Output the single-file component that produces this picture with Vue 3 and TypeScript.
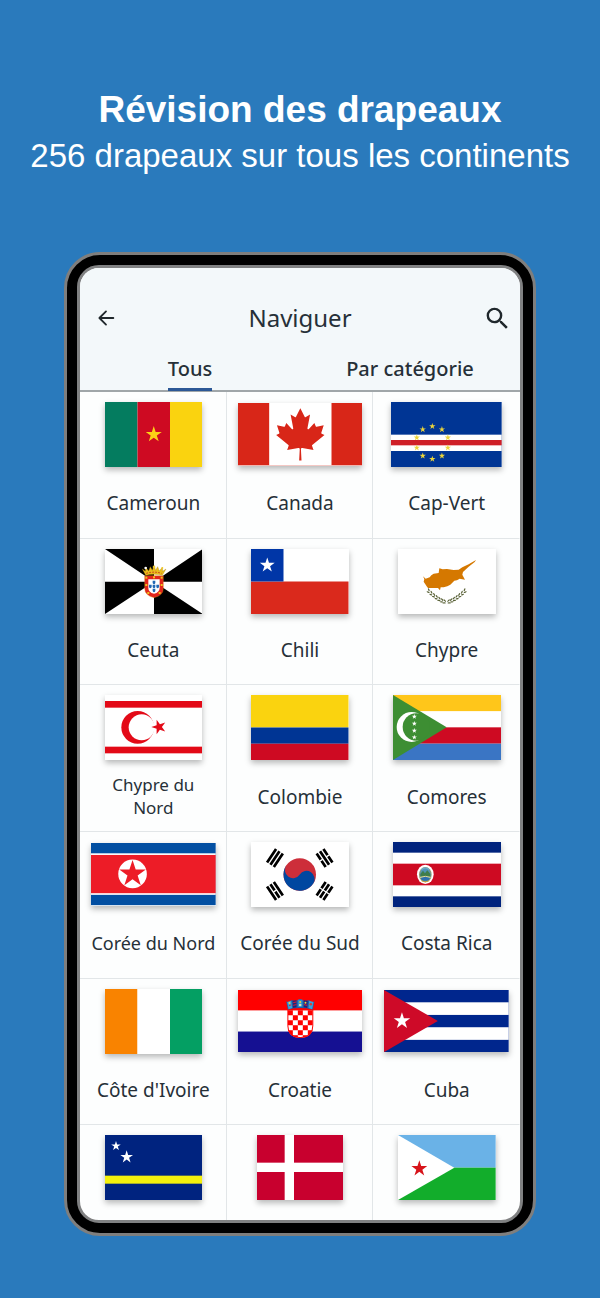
<script setup lang="ts">
import { ref } from 'vue'

type Shape = { tag: string; attrs: Record<string, string | number> }
type Flag = { name?: string; w: number; h: number; box?: string; size?: 'medium' | 'small'; shapes: Shape[] }

const rect = (x: number, y: number, width: number, height: number, fill: string): Shape => ({
  tag: 'rect',
  attrs: { x, y, width, height, fill },
})
const path = (d: string, fill: string, extra: Record<string, string | number> = {}): Shape => ({
  tag: 'path',
  attrs: { d, fill, ...extra },
})
const circle = (cx: number, cy: number, r: number, fill: string): Shape => ({
  tag: 'circle',
  attrs: { cx, cy, r, fill },
})
const ellipse = (cx: number, cy: number, rx: number, ry: number, fill: string, angle = 0): Shape => ({
  tag: 'ellipse',
  attrs: { cx, cy, rx, ry, fill, transform: `rotate(${angle} ${cx} ${cy})` },
})
const star = (cx: number, cy: number, r: number, fill: string, angle = -90): Shape => {
  const points = Array.from({ length: 10 }, (_, i) => {
    const a = ((angle + i * 36) * Math.PI) / 180
    const d = i % 2 ? r * 0.382 : r
    return `${(cx + d * Math.cos(a)).toFixed(2)},${(cy + d * Math.sin(a)).toFixed(2)}`
  }).join(' ')
  return { tag: 'polygon', attrs: { points, fill } }
}

const capeVerdeStars = Array.from({ length: 10 }, (_, i) => {
  const a = ((i * 36 - 90) * Math.PI) / 180
  return star(124 + 49 * Math.cos(a), 122 + 49 * Math.sin(a), 10, '#ecd53a')
})

// Two olive branches that rise from a shared foot.
const oliveLeaves = [-1, 1].flatMap((side) =>
  Array.from({ length: 7 }, (_, i) => {
    const t = (i + 0.7) / 7
    const x = 146 + side * 56 * t
    const y = 160 - 36 * Math.pow(t, 1.5)
    const slope = -side * (15 + 30 * t)
    return [
      ellipse(x, y - 4, 5, 2, '#5a6238', slope - side * 25),
      ellipse(x + side * 2, y + 3, 5, 2, '#5a6238', slope + side * 20),
    ]
  }).flat(),
)

const checkers = Array.from({ length: 30 }, (_, i) => ({ c: i % 5, r: Math.floor(i / 5) }))
  .filter(({ c, r }) => (c + r) % 2 === 0)
  .map(({ c, r }): Shape => {
    const square = rect(150 + c * 15, 61 + r * 15, 15, 15, '#f00')
    return { tag: 'rect', attrs: { ...square.attrs, 'clip-path': 'url(#shield)' } }
  })

const trigrams = 'M-6-25H6M-6-22H6M-6-19H6M-6 19H6M-6 22H6M-6 25H6'

const flags: Flag[] = [
  {
    name: 'Cameroun', w: 150, h: 100,
    shapes: [rect(0, 0, 50, 100, '#047c5f'), rect(50, 0, 50, 100, '#ce0a22'), rect(100, 0, 50, 100, '#fad30f'), star(75, 50, 13, '#fcd116')],
  },
  {
    name: 'Canada', w: 9600, h: 4800,
    shapes: [
      rect(0, 0, 9600, 4800, '#d82618'),
      path('m2400 0h4800v4800h-4800zm2490 4430-45-863a95 95 0 0 1 111-98l859 151-116-320a65 65 0 0 1 20-73l941-762-212-99a65 65 0 0 1-34-79l186-572-542 115a65 65 0 0 1-73-38l-105-247-423 454a65 65 0 0 1-111-57l204-1052-327 189a65 65 0 0 1-91-27l-332-652-332 652a65 65 0 0 1-91 27l-327-189 204 1052a65 65 0 0 1-111 57l-423-454-105 247a65 65 0 0 1-73 38l-542-115 186 572a65 65 0 0 1-34 79l-212 99 941 762a65 65 0 0 1 20 73l-116 320 859-151a95 95 0 0 1 111 98l-45 863z', '#fff'),
    ],
  },
  {
    name: 'Cap-Vert', w: 332, h: 195,
    shapes: [rect(0, 0, 332, 195, '#003594'), rect(0, 98, 332, 49, '#fff'), rect(0, 114, 332, 16, '#cf1f27'), ...capeVerdeStars],
  },
  {
    name: 'Ceuta', w: 293, h: 195,
    shapes: [
      rect(0, 0, 293, 195, '#fff'),
      path('M0 0H147V98ZM293 0V98H147ZM0 98H147L0 195ZM147 98L293 195H147Z', '#000'),
      path('M119 80H175V118Q175 140 147 146Q119 140 119 118Z', '#e2251c', { stroke: '#d9a514', 'stroke-width': 1 }),
      path('M130 91H164V116Q164 130 147 134Q130 130 130 116Z', '#fff'),
      ...[[147, 100], [136, 112], [147, 112], [158, 112], [147, 124]].map(([x, y]) => path(`M${x - 4} ${y - 5}h8v6q0 4-4 5q-4-1-4-5z`, '#2368b4')),
      ...[[124, 86], [147, 85], [170, 86], [124, 108], [170, 108], [130, 132], [164, 132]].map(([x, y]) => rect(x - 3, y - 3, 6, 6, '#f1c31b')),
      path('M122 79L112 60L121 67L122 55L131 66L136 53L142 64L147 49L152 64L158 53L163 66L172 55L173 67L183 60L172 79Q147 72 122 79Z', '#e9bd1c', { stroke: '#a87b10', 'stroke-width': 1 }),
      circle(122, 57, 4, '#fff'),
      circle(147, 54, 4, '#efc92f'),
      circle(172, 57, 3, '#efc92f'),
      path('M124 73Q147 66 170 73', 'none', { stroke: '#c9391c', 'stroke-width': 3, 'stroke-dasharray': '5 4' }),
    ],
  },
  {
    name: 'Chili', w: 150, h: 100,
    shapes: [rect(0, 0, 150, 50, '#fff'), rect(0, 50, 150, 50, '#da291c'), rect(0, 0, 50, 50, '#0036a7'), star(25, 25, 12, '#fff')],
  },
  {
    name: 'Chypre', w: 293, h: 195,
    shapes: [
      rect(0, 0, 293, 195, '#fff'),
      path('M75 82L83 89L95 85L100 79L107 74L122 72L124 58L134 61L147 60L167 63L182 62L193 55L212 46L234 33L230 39L212 53L195 69L193 77L201 92L185 89L177 94L169 95L157 107L148 112L137 115L128 115L126 124L120 117L102 117L90 117L87 113L83 107L77 98L79 90Z', '#d57800'),
      ...oliveLeaves,
    ],
  },
  {
    name: 'Chypre du Nord', w: 293, h: 195, size: 'small',
    shapes: [
      rect(0, 0, 293, 195, '#fff'), rect(0, 18, 293, 20, '#e30a17'), rect(0, 155, 293, 20, '#e30a17'),
      circle(98, 97, 49, '#e30a17'), circle(110, 97, 39, '#fff'), star(162, 96, 23, '#e30a17', 180),
    ],
  },
  {
    name: 'Colombie', w: 150, h: 100,
    shapes: [rect(0, 0, 150, 50, '#fad30f'), rect(0, 50, 150, 25, '#003594'), rect(0, 75, 150, 25, '#ce0a22')],
  },
  {
    name: 'Comores', w: 325, h: 195,
    shapes: [
      rect(0, 0, 325, 49, '#ffc61a'), rect(0, 49, 325, 48, '#fff'), rect(0, 97, 325, 49, '#ce0a22'), rect(0, 146, 325, 49, '#3a75c4'),
      path('M0 0L161 97L0 195Z', '#3d8e33'),
      circle(56, 96, 45, '#fff'), circle(70, 96, 41, '#3d8e33'),
      ...[65, 86, 107, 127].map((y) => star(64, y, 8, '#fff')),
    ],
  },
  {
    name: 'Corée du Nord', w: 375, h: 187, size: 'medium',
    shapes: [
      rect(0, 0, 375, 187, '#024fa2'), rect(0, 31, 375, 125, '#fff'), rect(0, 36, 375, 115, '#ed1c27'),
      circle(125, 93, 43, '#fff'), star(125, 93, 42, '#ed1c27'),
    ],
  },
  {
    name: 'Corée du Sud', w: 72, h: 48, box: '-36 -24 72 48',
    shapes: [
      rect(-36, -24, 72, 48, '#fff'),
      path(trigrams, 'none', { stroke: '#000', 'stroke-width': 2, transform: 'rotate(-56.31)' }),
      path('M0 17V27', 'none', { stroke: '#fff', transform: 'rotate(-56.31)' }),
      path(trigrams, 'none', { stroke: '#000', 'stroke-width': 2, transform: 'rotate(-123.69)' }),
      path('M0-23.500V-20.500M0 17V20.500M0 23.500V27', 'none', { stroke: '#fff', transform: 'rotate(-123.69)' }),
      circle(0, 0, 12, '#cd2e3a'),
      path('M0-12A6 6 0 0 0 0 0A6 6 0 0 1 0 12A12 12 0 0 1 0-12Z', '#0047a0', { transform: 'rotate(-56.31)' }),
    ],
  },
  {
    name: 'Costa Rica', w: 325, h: 195,
    shapes: [
      rect(0, 0, 325, 195, '#00237d'), rect(0, 32, 325, 131, '#fff'), rect(0, 65, 325, 65, '#ce0a22'),
      ellipse(97, 97, 25, 29, '#fff'),
      ellipse(97, 98, 19, 23, '#8c9a70'),
      ellipse(97, 98, 16, 19, '#4f93b8'),
      path('M82 96L90 86L96 94L103 85L112 96V105H82Z', '#3f7d4b'),
      path('M83 108Q97 101 111 108L106 116H88Z', '#2d6fae'),
      path('M85 83Q97 72 109 83', 'none', { stroke: '#6aa9cf', 'stroke-width': 4 }),
      path('M81 106Q97 100 113 106', 'none', { stroke: '#e6dc9c', 'stroke-width': 3 }),
      path('M85 116Q97 124 109 116', 'none', { stroke: '#c9a640', 'stroke-width': 3 }),
    ],
  },
  {
    name: "Côte d'Ivoire", w: 150, h: 100,
    shapes: [rect(0, 0, 50, 100, '#f98300'), rect(50, 0, 50, 100, '#fff'), rect(100, 0, 50, 100, '#049f63')],
  },
  {
    name: 'Croatie', w: 375, h: 187,
    shapes: [
      rect(0, 0, 375, 62, '#f00'), rect(0, 62, 375, 63, '#fff'), rect(0, 125, 375, 62, '#151092'),
      path('M150 60H225V108Q225 143 187 143Q150 143 150 108Z', '#fff', { stroke: '#f00', 'stroke-width': 3 }),
      ...checkers,
      path('M150 59L145 34L156 39L160 30L172 34L187 27L202 34L214 30L219 39L230 34L225 59Q187 50 150 59Z', '#1b5fa8'),
      path('M148 36L160 32L163 54L152 58Z', '#3aa0dc'),
      path('M164 32L176 31V52L166 54Z', '#20227c'),
      path('M180 29H194V51H180Z', '#2f8fd0'),
      path('M198 31L210 32L208 54L198 52Z', '#20227c'),
      path('M214 32L227 36L223 58L212 54Z', '#3aa0dc'),
      path('M166 38L176 36M166 46L176 44M198 44L208 46M153 47L160 45', 'none', { stroke: '#e2202c', 'stroke-width': 3 }),
      circle(155, 39, 3, '#f1d23a'), circle(187, 36, 3, '#f1d23a'), circle(203, 38, 3, '#f1d23a'), circle(219, 43, 4, '#e33b2e'), circle(187, 45, 4, '#d8e3c0'),
    ],
  },
  {
    name: 'Cuba', w: 375, h: 187,
    shapes: [rect(0, 0, 375, 187, '#00268d'), rect(0, 37, 375, 38, '#fff'), rect(0, 112, 375, 38, '#fff'), path('M0 0L162 93L0 187Z', '#ce0a28'), star(54, 93, 26, '#fff')],
  },
  {
    w: 293, h: 195,
    shapes: [rect(0, 0, 293, 195, '#00237f'), rect(0, 122, 293, 24, '#f4f00c'), star(33, 33, 15, '#fff'), star(65, 66, 20, '#fff')],
  },
  {
    w: 259, h: 195,
    shapes: [rect(0, 0, 259, 195, '#c8002e'), rect(83, 0, 28, 195, '#fff'), rect(0, 83, 259, 28, '#fff')],
  },
  {
    w: 293, h: 195,
    shapes: [rect(0, 0, 293, 98, '#6ab2e7'), rect(0, 98, 293, 97, '#12ad2b'), path('M0 0L169 98L0 195Z', '#fff'), star(64, 101, 25, '#d7141a')],
  },
]

const tabs = ['Tous', 'Par catégorie']
const active = ref(0)
</script>

<template>
  <main class="page">
    <header class="intro">
      <h1>Révision des drapeaux</h1>
      <p>256 drapeaux sur tous les continents</p>
    </header>

    <section class="phone">
      <div class="screen">
        <div class="top">
          <div class="bar">
            <button type="button" class="icon-button" aria-label="Retour">
              <svg class="back" viewBox="0 0 24 24" aria-hidden="true">
                <path d="M20 12H5M12 4.800L4.800 12L12 19.200" />
              </svg>
            </button>
            <h2>Naviguer</h2>
            <button type="button" class="icon-button" aria-label="Rechercher">
              <svg class="search" viewBox="0 0 24 24" aria-hidden="true">
                <path d="M15.500 14h-.79l-.28-.27A6.471 6.471 0 0 0 16 9.500 6.500 6.500 0 1 0 9.500 16c1.610 0 3.090-.59 4.230-1.570l.27.28v.79l5 4.990L20.490 19l-4.990-5zm-6 0C7.010 14 5 11.990 5 9.500S7.010 5 9.500 5 14 7.010 14 9.500 11.990 14 9.500 14z" />
              </svg>
            </button>
          </div>
          <div class="tabs" role="tablist">
            <button
              v-for="(tab, i) in tabs"
              :key="tab"
              type="button"
              role="tab"
              class="tab"
              :class="{ active: active === i }"
              :aria-selected="active === i"
              @click="active = i"
            >
              <span>{{ tab }}</span>
            </button>
          </div>
        </div>

        <ul class="grid">
          <li v-for="(flag, index) in flags" :key="index" class="cell">
            <div class="frame">
              <svg
                class="flag"
                :class="{ wide: flag.w / flag.h > 1.9 }"
                :viewBox="flag.box ?? `0 0 ${flag.w} ${flag.h}`"
                preserveAspectRatio="none"
                aria-hidden="true"
              >
                <clipPath v-if="flag.name === 'Croatie'" id="shield">
                  <path d="M150 60H225V108Q225 143 187 143Q150 143 150 108Z" />
                </clipPath>
                <component :is="shape.tag" v-for="(shape, i) in flag.shapes" :key="i" v-bind="shape.attrs" />
              </svg>
            </div>
            <div v-if="flag.name" class="label" :class="flag.size">{{ flag.name }}</div>
          </li>
        </ul>
      </div>
    </section>
  </main>
</template>

<style>
body {
  margin: 0;
  background: #2a7abc;
}
</style>

<style scoped>
.page {
  box-sizing: border-box;
  min-height: 100vh;
  padding: 87px 64px 62px;
  background: #2a7abc;
  font-family: "Noto Sans", sans-serif;
  color: #263038;
}
.intro {
  margin: 0 -64px 73px;
  color: #fff;
  font-family: "Liberation Sans", Arial, sans-serif;
  text-align: center;
}
.intro h1,
.intro p {
  margin: 0;
  line-height: 46px;
}
.intro h1 {
  font-size: 37px;
  font-weight: 700;
}
.intro p {
  font-size: 33px;
}
.phone {
  padding: 10px;
  border: 3px solid #7f7e7d;
  border-radius: 36px;
  background: #000;
}
.screen {
  overflow: hidden;
  aspect-ratio: 440 / 952;
  border: 3px solid #808182;
  border-radius: 22px;
  background: #fdfefe;
}
.top {
  padding-top: 22px;
  border-bottom: 2px solid #a0a6a9;
  background: #f3f8fa;
}
.bar {
  display: flex;
  align-items: center;
  justify-content: space-between;
  height: 56px;
  padding: 0 8px;
}
.bar h2 {
  margin: 0;
  font-size: 24px;
  font-weight: 400;
  line-height: 32px;
}
.icon-button {
  display: grid;
  width: 36px;
  height: 36px;
  padding: 0;
  border: 0;
  background: none;
  color: #20282c;
  place-items: center;
}
.icon-button:last-child {
  justify-items: end;
}
.back {
  width: 22px;
  height: 22px;
  fill: none;
  stroke: currentColor;
  stroke-width: 2;
  stroke-linecap: round;
  stroke-linejoin: round;
}
.search {
  width: 29px;
  height: 29px;
  fill: currentColor;
}
.tabs {
  display: flex;
  margin-bottom: -1px;
  padding-top: 4px;
}
.tab {
  display: flex;
  flex: 1;
  justify-content: center;
  padding: 0;
  border: 0;
  background: none;
  color: #263038;
  font: 500 20px/38px "Noto Sans", sans-serif;
}
.tab span {
  border-bottom: 3px solid transparent;
}
.tab.active span {
  border-bottom-color: #2c5896;
}
.grid {
  display: grid;
  grid-template-columns: repeat(3, 1fr);
  margin: 0;
  padding: 0;
  list-style: none;
}
.cell {
  display: flex;
  flex-direction: column;
  box-sizing: border-box;
  aspect-ratio: 1;
  padding: 10px 0 0 1px;
  border-right: 1px solid #e2e6e8;
  border-bottom: 1px solid #e2e6e8;
}
.cell:nth-child(3n) {
  border-right-color: transparent;
}
.frame {
  display: flex;
  align-items: center;
  justify-content: center;
  height: 65px;
  padding: 0 10px;
}
.flag {
  display: block;
  width: auto;
  height: 65px;
  box-shadow: 0 3px 6px rgba(0, 0, 0, 0.28);
}
.flag.wide {
  width: 100%;
  height: auto;
}
.label {
  display: flex;
  flex: 1;
  align-items: center;
  justify-content: center;
  padding: 3px 10px 0;
  font-size: 19px;
  line-height: 23px;
  text-align: center;
}
.label.medium {
  padding: 3px 0 0;
  font-size: 18px;
}
.label.small {
  padding: 1px 24px 0;
  font-size: 17px;
}
</style>
